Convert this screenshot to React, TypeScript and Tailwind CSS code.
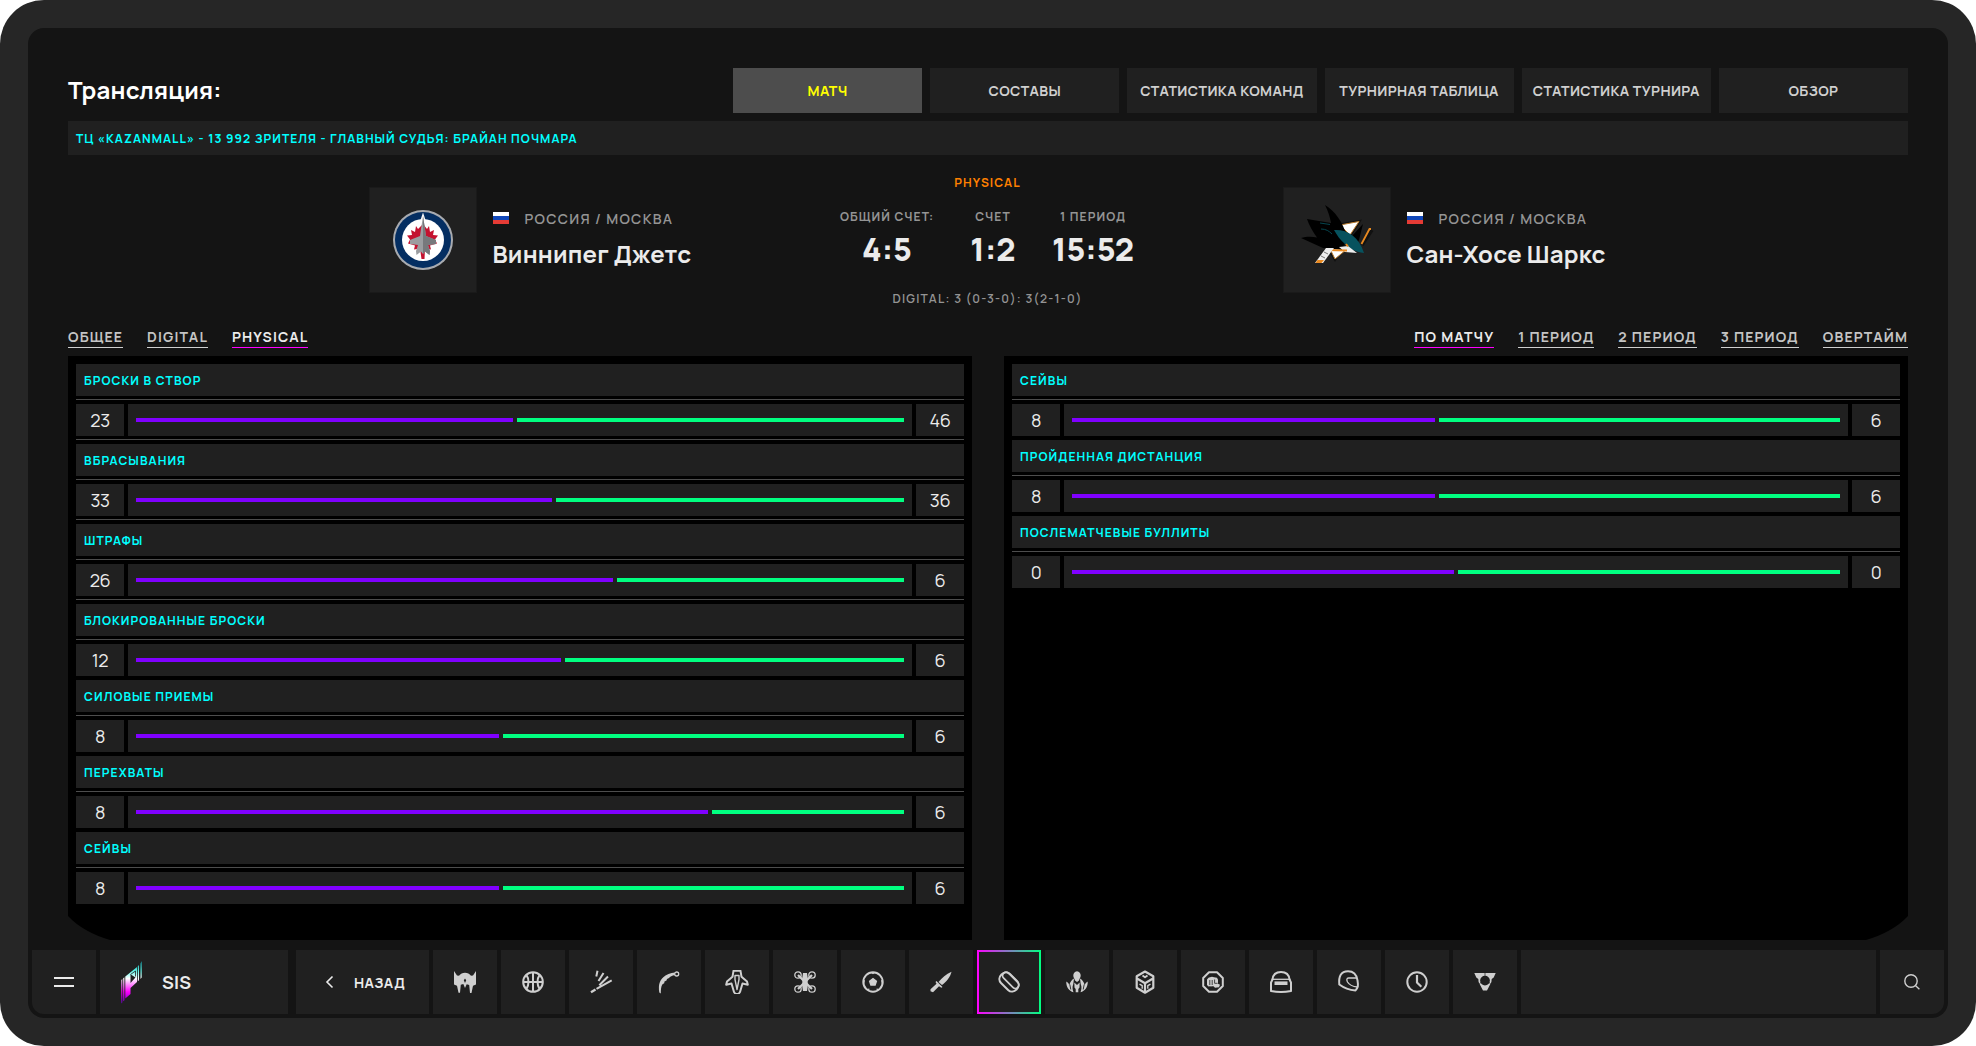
import React from "react";

const TABS = ["МАТЧ", "СОСТАВЫ", "СТАТИСТИКА КОМАНД", "ТУРНИРНАЯ ТАБЛИЦА", "СТАТИСТИКА ТУРНИРА", "ОБЗОР"];

type Stat = { title: string; home: number; away: number; split: number; divider?: boolean };

const LEFT: Stat[] = [
  { title: "БРОСКИ В СТВОР", home: 23, away: 46, split: 377, divider: true },
  { title: "ВБРАСЫВАНИЯ", home: 33, away: 36, split: 416, divider: true },
  { title: "ШТРАФЫ", home: 26, away: 6, split: 477, divider: true },
  { title: "БЛОКИРОВАННЫЕ БРОСКИ", home: 12, away: 6, split: 425 },
  { title: "СИЛОВЫЕ ПРИЕМЫ", home: 8, away: 6, split: 363 },
  { title: "ПЕРЕХВАТЫ", home: 8, away: 6, split: 572 },
  { title: "СЕЙВЫ", home: 8, away: 6, split: 363 },
];

const RIGHT: Stat[] = [
  { title: "СЕЙВЫ", home: 8, away: 6, split: 363 },
  { title: "ПРОЙДЕННАЯ ДИСТАНЦИЯ", home: 8, away: 6, split: 363 },
  { title: "ПОСЛЕМАТЧЕВЫЕ БУЛЛИТЫ", home: 0, away: 0, split: 382 },
];

function StatBlock({ s }: { s: Stat }) {
  return (
    <div className="mb-1">
      <div className="flex h-8 items-center bg-[#202020] px-2 pt-0.5 text-[12px] font-bold tracking-[1.08px] text-[#00ffff]">{s.title}</div>
      <div className="mt-[3px] h-px bg-[#4d4d4d]" />
      <div className="mt-1 flex h-8 gap-1 text-[18px] tracking-[-0.4px] text-[#ebebeb]">
        <div className="flex w-12 items-center justify-center bg-[#202020]">{s.home}</div>
        <div className="flex flex-1 items-center gap-1 bg-[#202020] px-2">
          <div className="h-1 bg-[#8000ff]" style={{ width: s.split }} />
          <div className="h-1 flex-1 bg-[#00ff80]" />
        </div>
        <div className="flex w-12 items-center justify-center bg-[#202020]">{s.away}</div>
      </div>
      {s.divider && <div className="mt-[3px] h-px bg-[#4d4d4d]" />}
    </div>
  );
}

function Flag() {
  return (
    <div className="flex h-3 w-4 flex-col">
      <div className="flex-1 bg-white" />
      <div className="flex-1 bg-[#1047b9]" />
      <div className="flex-1 bg-[#e53b35]" />
    </div>
  );
}

function Team({ name, logo }: { name: string; logo: React.ReactNode }) {
  return (
    <div className="flex w-[340px] gap-[15.5px]">
      <div className="flex h-[106px] w-[108px] shrink-0 items-center justify-center border border-[#1a1a1a] bg-[#202020]">{logo}</div>
      <div className="pt-[21px]">
        <div className="flex h-5 items-center gap-4">
          <Flag />
          <span className="whitespace-nowrap text-[14px] font-semibold tracking-[1.3px] text-[#949494]">РОССИЯ / МОСКВА</span>
        </div>
        <div className="mt-[10px] whitespace-nowrap text-[24px] leading-8 font-bold tracking-[0.2px] text-[#ebebeb]">{name}</div>
      </div>
    </div>
  );
}

function JetsLogo() {
  return (
    <svg width="62" height="62" viewBox="0 0 62 62">
      <circle cx="31" cy="31" r="30" fill="#a8abb0" />
      <circle cx="31" cy="31" r="28" fill="#042e62" />
      <circle cx="31" cy="31" r="21" fill="#fff" />
      <path d="M31 3.500l3 9H28z" fill="#fff" />
      <path d="M31 15l4 5 2-3 1 6 4-2-1 5 5 .5-3 4 2 4-7 2 1 4-6-1L32.500 50h-3L28 39.500l-6 1 1-4-7-2 2-4-3-4 5-.5-1-5 4 2 1-6 2 3z" fill="#c4122f" />
      <path d="M31 7l2 13 1 7 10 4v4l-8 1 2 6-.5 4-4.500-3.500L31 45l-2-2.500-4.500 3.500-.5-4 2-6-8-1v-4l10-4 1-7z" fill="#9b9da0" />
      <path d="M31 7l2 13 1 7 10 4v4l-8 1 2 6-.5 4-4.500-3.500L31 45z" fill="#77797c" />
    </svg>
  );
}

function SharksLogo() {
  return (
    <svg className="mb-2.5" width="74" height="62" viewBox="0 0 74 62">
      <path d="M36 20l26-4.500L35 58 22 36z" fill="#111" />
      <path d="M40 21l19-3.500L50 31zM29 43l18 2-12 10z" fill="#fff" stroke="#b87a2c" strokeWidth="1" />
      <path d="M63 20l-12 13 4 11 4-8z" fill="#000" />
      <path d="M72 26L62 41" stroke="#111" strokeWidth="3.500" />
      <path d="M71 25h-1.500L61.500 40" stroke="#e98a21" strokeWidth="1.800" fill="none" />
      <path d="M25 1c10 6 18 17 22 32l-5 13L23 44 1 34c5-1.500 11-1.500 16-.5C13 28 9 21 7 15l24 4C30 13 28 7 25 1z" fill="#000" />
      <path d="M20 19l10 1.500M21 25c5 0 8 2 11 5" stroke="#06454e" strokeWidth="1" fill="none" />
      <path d="M34 26c12-1 25 6 30 23-9-1-15-5-19-9-5-4-8-9-11-14z" fill="#07525e" />
      <path d="M48 42l9 7-12-1-6-5z" fill="#eee" />
      <path d="M27 46l20 .5M46 40l2 2.500" stroke="#e98a21" strokeWidth="2" fill="none" />
      <path d="M26 44h8L23 59h-8z" fill="#eee" />
      <path d="M24 48l4 2M21 52l4 2" stroke="#777" strokeWidth="1" />
      <path d="M17.500 56h6.500l-2.500 3h-6z" fill="#e98a21" />
    </svg>
  );
}

const stroke = { fill: "none", stroke: "#cfcfcf", strokeWidth: 2, strokeLinejoin: "round" as const };

const ICONS: React.ReactNode[] = [
  <path fillRule="evenodd" d="M1 1l3 4.500 2 .3C7.500 3.700 9.500 2.700 12 2.700s4.500 1 6 3.100l2-.3L23 1v13.500l-3 1.200-1.500 7.300H17l-.8-8-2.500-.7L12 18l-1.700-4-2.500.7-.8 8H5.500L4 15.700l-3-1.200zM12 8.500l-1.200 1.700L12 13l1.200-2.800z" />,
  <g {...stroke}>
    <circle cx="12" cy="12" r="9.800" />
    <path d="M12 2v20M2 12h20M5.500 5.200c2.600 3.600 2.600 10 0 13.600M18.500 5.200c-2.600 3.600-2.600 10 0 13.600" />
  </g>,
  <g {...stroke}>
    <path d="M2 22.200l4.500-2.700" strokeWidth="2.400" />
    <path d="M7.500 18.900l15.200-8.500M10.300 15.200l8.700-8.700M9.500 11l5-8M7.300 6.500L8.500.8" strokeWidth="2" />
  </g>,
  <g>
    <path d="M2.300 22.500C1 14 3 9 8.500 5.500c4-2.500 8-3 13.500-3.200v2L18 5c-3 .5-5 1.500-6 3l-2 1-.5 1.500-2 1-.3 1.800-1.700 1c-1.500 2-1.700 5.700-1.700 9.200z" />
    <circle cx="19.700" cy="4" r="2" fill="#202020" stroke="#cfcfcf" strokeWidth="1.300" />
  </g>,
  <g {...stroke}>
    <path d="M8.500.8h7l1 6 5.500 4.700.8 3.200-5.300-1.200L15 22l-1.500 2h-3L9 22l-2.500-8.500-5.300 1.200.8-3.200 5.500-4.700z" />
    <path d="M10 5.500v4l2 10 2-10v-4z" strokeWidth="1.400" />
  </g>,
  <g>
    <path d="M10 3h4l.7 4.500V17L14 21h-4l-.7-4V7.500z" />
    <g {...stroke} strokeWidth="1.300">
      <circle cx="5" cy="5" r="3.200" />
      <circle cx="19" cy="5" r="3.200" />
      <circle cx="5" cy="19" r="3.200" />
      <circle cx="19" cy="19" r="3.200" />
      <path d="M5 5l14 14M19 5L5 19" strokeWidth="2.200" />
    </g>
  </g>,
  <g>
    <circle cx="12" cy="12" r="9.700" {...stroke} />
    <path d="M12 7.800l4.200 3.100-1.600 4.900H9.400l-1.600-4.900zM9.500 2.500h5l-2.500 1.700zM2 9.500l2 1-1 3.500zM22 9.500l-2 1 1 3.500zM6 19l2.300-.5.2 2zM18 19l-2.300-.5-.2 2z" />
  </g>,
  <path d="M22.500 1.800c-1 5-5 10-9.500 13.200l-3.500-3C13 8 17 4 22.500 1.800zM7.500 11l6 6-1.200.7-2.300-1.500-6 6-2.500-1 0-2 6-5.500-1-1.700z" />,
  <g {...stroke} transform="rotate(45 12 12)">
    <path d="M7 5.700h10c7.500 0 7.500 12.600 0 12.600H7c-7.500 0-7.500-12.600 0-12.600z" />
    <rect x="2" y="6" width="20" height="7" rx="3.500" strokeWidth="1.700" />
  </g>,
  <g>
    <path d="M12 1.200c2.400.3 3.700 2 3.700 4.300 0 2-1.300 3.300-1.700 5l-2 1.500-2-1.500c-.4-1.700-1.700-3-1.700-5C8.300 3.200 9.600 1.500 12 1.200z" />
    <path d="M1.300 11.500c1.500 1 2.500 2 3 3.500C5.300 12 6.800 9.500 9 8.500l-.7 5.500c-1.300 3-.8 5.500.2 8.300C4 21 1 17 1.300 11.500zM22.700 11.500c-1.500 1-2.500 2-3 3.500C18.700 12 17.200 9.500 15 8.500l.7 5.500c1.300 3 .8 5.500-.2 8.300 4.500-1.300 7.500-5.300 7.200-10.800z" />
    <path d="M9.300 12.500L12 15l2.700-2.500-.2 5-1.200 1.500v3.300h-2.600V19l-1.200-1.500z" />
    <path d="M4.800 14.500l1 5M19.200 14.500l-1 5" stroke="#202020" strokeWidth=".9" />
  </g>,
  <g {...stroke} strokeWidth="2.200">
    <path d="M12 1.500l8.300 4.700v11.500L12 22.700l-8.300-5V6.200z" />
    <path d="M4 8.500l8 4.700 8-4.700M12 13.500v9" />
    <path d="M9.500 5.500l2.500 1.800 2.500-1.800" strokeWidth="1.800" />
    <path d="M6.500 14.200l2.700 1.500v3M17.500 14.200l-2.700 1.500v3" strokeWidth="1.400" />
  </g>,
  <g>
    <path d="M8 2.200h8l5.800 5.800v8L16 21.800H8L2.200 16V8z" {...stroke} />
    <path d="M6 9.500l1.500-1.700L9 7.300l2-.6 2 .5 3 .5 1 2v4l2 1-1 2.500-4 .5-1.500-1.500H11l-1 .3-1-.3-1.500.3L6 15z" />
    <path d="M8.800 10v5M11.200 10v5M13.600 9.500v3.800h3" stroke="#202020" strokeWidth=".8" fill="none" />
  </g>,
  <g {...stroke}>
    <path d="M3.500 9.500C4 4.500 7 2 12 2s8 2.500 8.500 7.500l1.500 3V21c-6 1.300-14 1.300-20 0v-8.500z" />
    <path d="M2.500 9.300h19" strokeWidth="1.300" />
    <path d="M5.500 13.200h13" strokeWidth="3.600" />
  </g>,
  <g {...stroke}>
    <path d="M2.300 14.500C1.500 6 4 1.300 11 1.300c6 0 8.500 3 9.500 9 1 6 .5 7-2 10.200C13 20 7 18 2.300 14.500z" />
    <path d="M20 8h-8.500c-2 0-2 2-1 4 1.500 2.500 5 4.500 10 5" strokeWidth="1.300" />
  </g>,
  <g {...stroke}>
    <circle cx="12" cy="12" r="9.700" />
    <path d="M12 5v7.500l4.300 4.200" strokeWidth="2.200" />
  </g>,
  <g>
    <path fillRule="evenodd" d="M1.300 3h21.400l-2 4.500-2 1.500-.3 3L14 20.500h-4L5.600 12l-.3-3-2-1.500zM12 5.700a4.900 4.900 0 1 0 0 9.800 4.900 4.900 0 0 0 0-9.800z" />
    <path d="M12 2.500v4M6.500 13.500l1.500-1M17.500 13.500l-1.500-1" stroke="#202020" strokeWidth=".7" />
  </g>,
];

function SisLogo() {
  return (
    <svg width="22" height="44" viewBox="0 0 22 44">
      <defs>
        <linearGradient id="sis" x1="0" y1="44" x2="0" y2="0" gradientUnits="userSpaceOnUse">
          <stop offset="0" stopColor="#5a00b4" />
          <stop offset=".28" stopColor="#ff00ff" />
          <stop offset=".58" stopColor="#fff" />
          <stop offset=".75" stopColor="#62f5e6" />
          <stop offset="1" stopColor="#008a98" />
        </linearGradient>
      </defs>
      <path fill="url(#sis)" d="M.3 20l1-1v23.500l-1 1zM2.200 18.200l1.200-1v23l-1.200 1zM4.300 16.400L16 7v15l-6.500 6v6l-5.200 4.500zM16.800 6.200L18 5v15.200l-1.200 1.100zM19.500 3.500L20.700 1v16.500l-1.200 1.500z" />
      <path d="M9.500 14.500l5-3.500v5.500" fill="none" stroke="#202020" strokeWidth=".8" />
      <path d="M9.500 14.200l5 3.300-5 5.500z" fill="#202020" />
    </svg>
  );
}

function SubTabs({ items, active }: { items: string[]; active: number }) {
  return (
    <div className="flex gap-6">
      {items.map((t, i) => (
        <div
          key={t}
          className={
            "h-[21px] border-b text-[14px] leading-5 font-bold tracking-[1.14px] whitespace-nowrap " +
            (i === active ? "border-[#ff00ff] text-[#ebebeb]" : "border-[#cfcfcf] text-[#c4c4c4]")
          }
        >
          {t}
        </div>
      ))}
    </div>
  );
}

function Score({ label, value, width }: { label: string; value: string; width: string }) {
  return (
    <div className={"flex flex-col items-center whitespace-nowrap " + width}>
      <div className="text-[12px] leading-4 font-bold tracking-[1.1px] text-[#949494]">{label}</div>
      <div className="mt-1 text-[32px] leading-10 font-extrabold text-[#ebebeb]">{value}</div>
    </div>
  );
}

export default function App() {
  return (
    <div className="h-[1046px] w-[1976px] overflow-hidden bg-white font-['Manrope','Inter',sans-serif]">
      <div className="h-full rounded-[44px] bg-[#262626] p-7">
        <div className="flex h-[990px] flex-col rounded-2xl bg-[#141414] px-1 pb-1">
          <main className="px-9 pt-10">
            <header className="flex h-[45px] items-center justify-between">
              <h1 className="pb-0.5 text-[24px] font-bold tracking-[0.2px] text-white">Трансляция:</h1>
              <nav className="grid h-full w-[1175px] grid-cols-6 gap-2">
                {TABS.map((t, i) => (
                  <div
                    key={t}
                    className={
                      "flex items-center justify-center text-[14px] font-bold tracking-[0.4px] whitespace-nowrap " +
                      (i === 0 ? "bg-[#4d4d4d] text-[#ffff00]" : "bg-[#202020] text-[#cfcfcf]")
                    }
                  >
                    {t}
                  </div>
                ))}
              </nav>
            </header>
            <div className="mt-2 flex h-[34px] items-center bg-[#202020] px-2 pt-0.5 text-[12px] font-bold tracking-[1.06px] text-[#00ffff]">
              ТЦ «KAZANMALL» - 13 992 ЗРИТЕЛЯ - ГЛАВНЫЙ СУДЬЯ: БРАЙАН ПОЧМАРА
            </div>

            <section className="flex h-[172px] pl-[301px]">
              <div className="pt-8">
                <Team name="Виннипег Джетс" logo={<JetsLogo />} />
              </div>
              <div className="flex w-[574px] flex-col items-center pt-5 pr-[18px]">
                <div className="pl-px text-[12px] leading-4 font-bold tracking-[1.1px] text-[#ff8000]">PHYSICAL</div>
                <div className="mt-[18px] flex gap-[38px]">
                  <Score label="ОБЩИЙ СЧЕТ:" value="4:5" width="w-[92px]" />
                  <Score label="СЧЕТ" value="1:2" width="w-[44px]" />
                  <Score label="1 ПЕРИОД" value="15:52" width="w-[80px]" />
                </div>
                <div className="mt-[22px] pl-px text-[12px] leading-4 font-semibold tracking-[1.2px] text-[#949494]">DIGITAL: 3 (0-3-0): 3(2-1-0)</div>
              </div>
              <div className="pt-8">
                <Team name="Сан-Хосе Шаркс" logo={<SharksLogo />} />
              </div>
            </section>

            <div className="flex h-[21px] justify-between">
              <SubTabs items={["ОБЩЕЕ", "DIGITAL", "PHYSICAL"]} active={2} />
              <SubTabs items={["ПО МАТЧУ", "1 ПЕРИОД", "2 ПЕРИОД", "3 ПЕРИОД", "ОВЕРТАЙМ"]} active={0} />
            </div>

            <div className="mt-2 flex h-[584px] gap-8">
              <div className="flex-1 bg-black p-2 [clip-path:path('M0_0H904V584H42Q15_576_0_560Z')]">
                {LEFT.map((s, i) => (
                  <StatBlock key={i} s={s} />
                ))}
              </div>
              <div className="flex-1 bg-black p-2 [clip-path:path('M0_0H904V560Q889_576_862_584H0Z')]">
                {RIGHT.map((s, i) => (
                  <StatBlock key={i} s={s} />
                ))}
              </div>
            </div>
          </main>

          <footer className="mt-auto flex h-16 gap-1">
            <div className="flex w-16 flex-col items-center justify-center gap-1.5 rounded-bl-xl bg-[#202020]">
              <div className="h-0.5 w-5 bg-[#ebebeb]" />
              <div className="h-0.5 w-5 bg-[#ebebeb]" />
            </div>
            <div className="mr-1 flex w-[188px] items-center gap-[19px] bg-[#202020] pl-[21px]">
              <SisLogo />
              <span className="text-[18px] font-bold tracking-[0.2px] text-[#ebebeb]">SIS</span>
            </div>
            <div className="flex w-[133px] items-center bg-[#202020] pl-[29px]">
              <svg width="9" height="14" viewBox="0 0 9 14" fill="none" stroke="#ebebeb" strokeWidth="1.600">
                <path d="M7.500 1.500L2 7l5.500 5.500" />
              </svg>
              <span className="ml-5 text-[14px] font-bold tracking-[0.5px] text-[#ebebeb]">НАЗАД</span>
            </div>
            {ICONS.map((icon, i) => (
              <div
                key={i}
                className={
                  "flex w-16 items-center justify-center " +
                  (i === 8
                    ? "border-2 border-transparent [background:linear-gradient(#202020,#202020)_padding-box,linear-gradient(90deg,#ff00ff,#00ff80)_border-box]"
                    : "bg-[#202020]")
                }
              >
                <svg width="24" height="24" viewBox="0 0 24 24" fill="#cfcfcf">
                  {icon}
                </svg>
              </div>
            ))}
            <div className="flex-1 bg-[#202020]" />
            <div className="flex w-16 items-center justify-center rounded-br-xl bg-[#202020]">
              <svg width="16" height="16" viewBox="0 0 16 16" fill="none" stroke="#cfcfcf" strokeWidth="1.400">
                <circle cx="7" cy="7" r="6.200" />
                <path d="M11.400 11.400l4 3.800" />
              </svg>
            </div>
          </footer>
        </div>
      </div>
    </div>
  );
}
